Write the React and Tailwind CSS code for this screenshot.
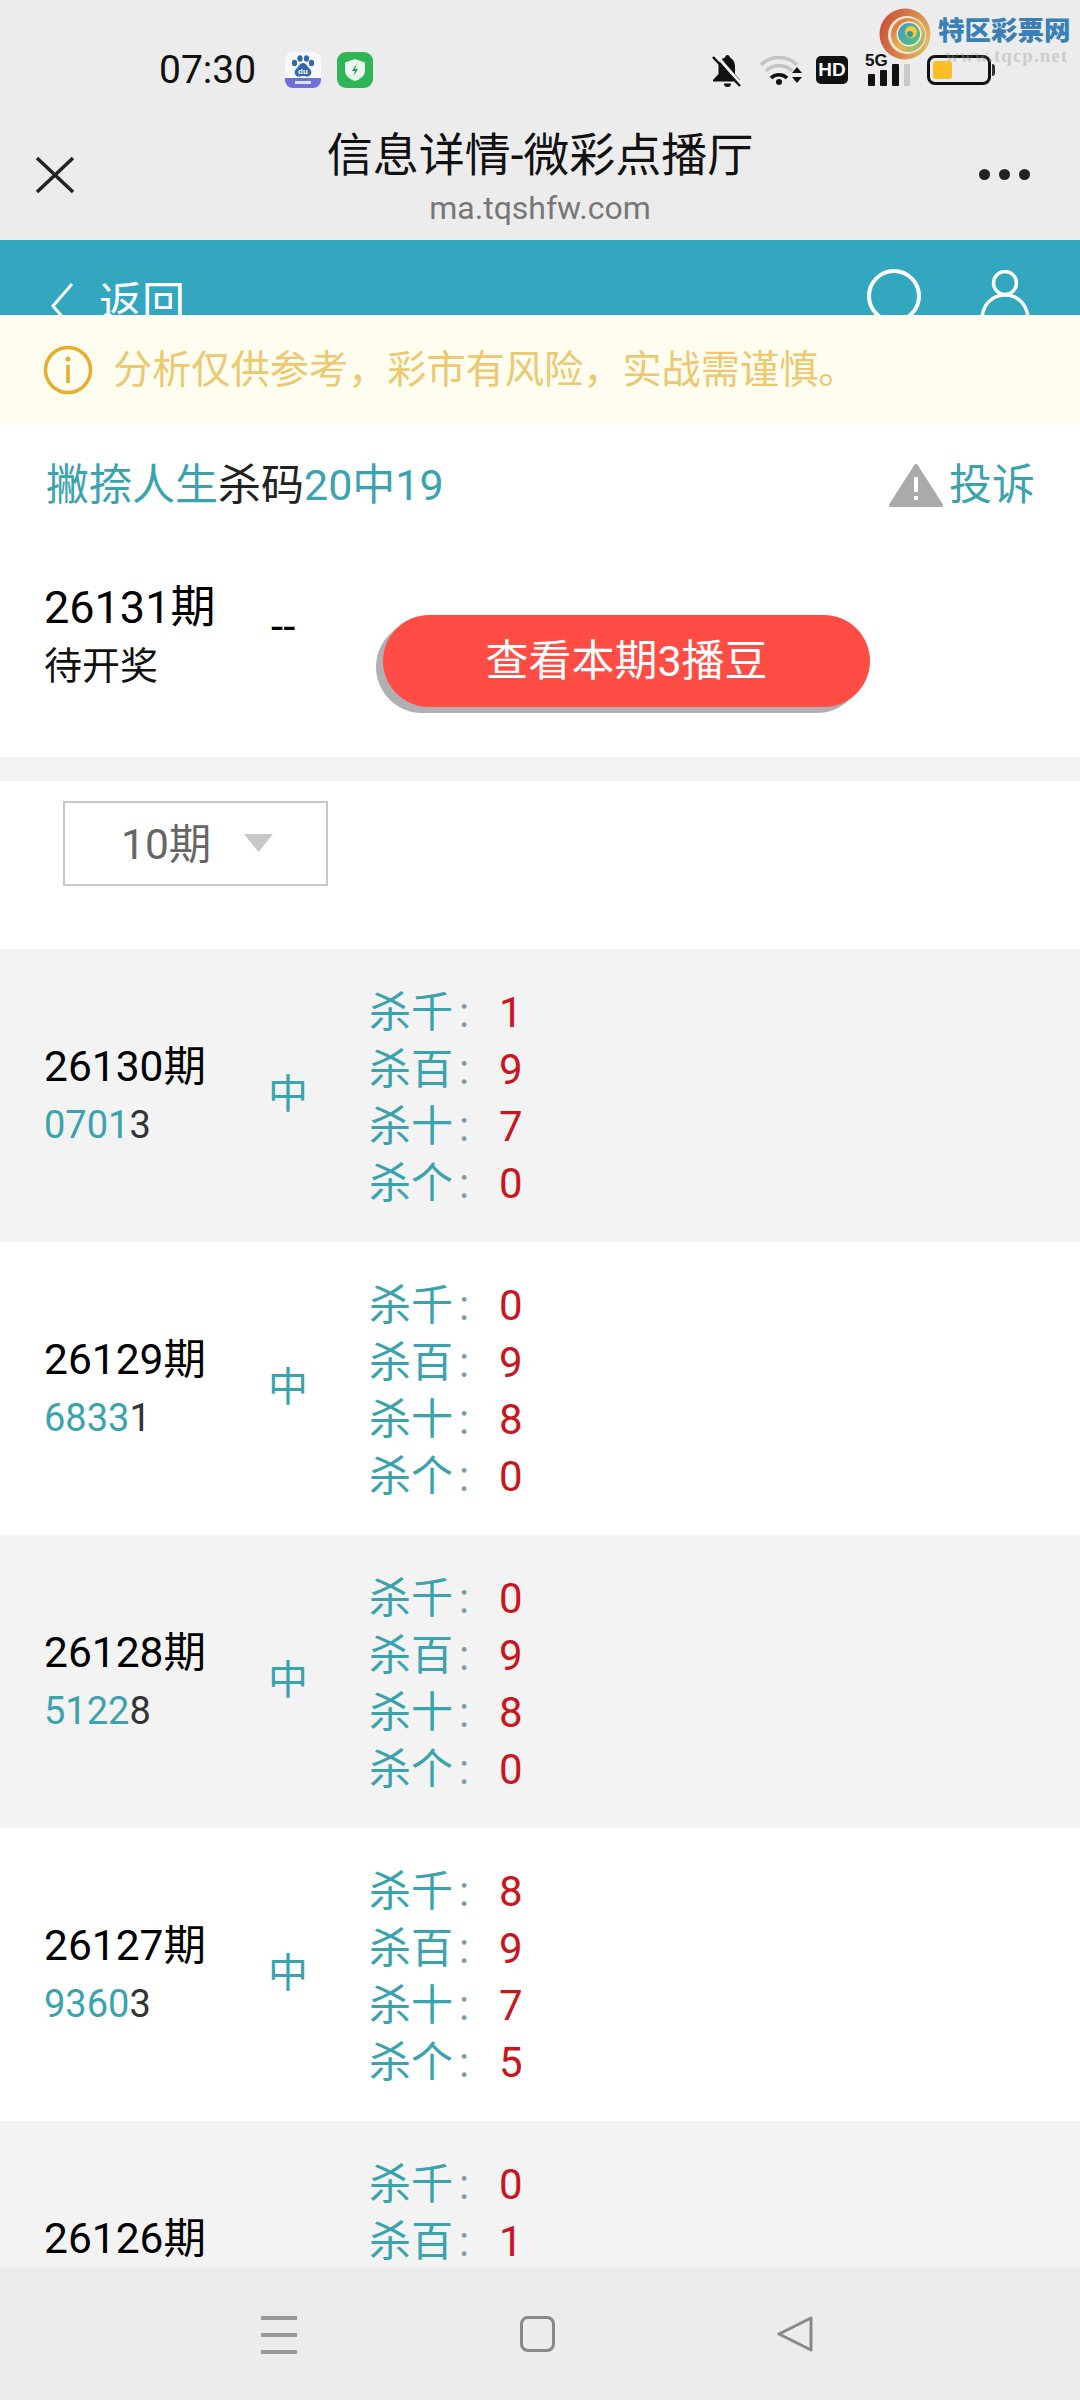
const ROWS = [
  { issue: '26130期', hit: '0701', rest: '3', kills: [['杀千', '1'], ['杀百', '9'], ['杀十', '7'], ['杀个', '0']] },
  { issue: '26129期', hit: '6833', rest: '1', kills: [['杀千', '0'], ['杀百', '9'], ['杀十', '8'], ['杀个', '0']] },
  { issue: '26128期', hit: '5122', rest: '8', kills: [['杀千', '0'], ['杀百', '9'], ['杀十', '8'], ['杀个', '0']] },
  { issue: '26127期', hit: '9360', rest: '3', kills: [['杀千', '8'], ['杀百', '9'], ['杀十', '7'], ['杀个', '5']] },
  { issue: '26126期', kills: [['杀千', '0'], ['杀百', '1']] },
]

function BaiduIcon() {
  return (
    <svg width="36" height="36" viewBox="0 0 36 36">
      <rect width="36" height="36" rx="8" fill="#f7f9fd" />
      <path d="M0 26h36v2a8 8 0 0 1-8 8H8a8 8 0 0 1-8-8z" fill="#6f6fd8" />
      <g fill="#3667a8">
        <ellipse cx="9.5" cy="11" rx="2.6" ry="3.2" />
        <ellipse cx="15" cy="6.5" rx="2.6" ry="3.2" />
        <ellipse cx="21.5" cy="6.5" rx="2.6" ry="3.2" />
        <ellipse cx="26.5" cy="11" rx="2.6" ry="3.2" />
        <path d="M18 11c-3 0-4 3-6 5-2 2-3 4-2 6 1 2 3 3 5 2.400 2-.5 4-.5 6 0 2 .6 4-.4 5-2.400 1-2 0-4-2-6-2-2-3-5-6-5z" />
      </g>
      <text x="18" y="22" textAnchor="middle" fontSize="8" fontWeight="700" fill="#fff" fontFamily="Liberation Sans">du</text>
      <rect x="10" y="29" width="16" height="3" fill="#dfe0fa" />
    </svg>
  )
}

function ShieldIcon() {
  return (
    <svg width="36" height="36" viewBox="0 0 36 36">
      <rect width="36" height="36" rx="9" fill="#2fb457" />
      <path d="M18 7l10 3.500v8c0 5-4 8.500-10 10.500-6-2-10-5.500-10-10.500v-8z" fill="#e9f8ee" />
      <path d="M19.500 12l-4.500 7h3l-1.500 5 4.500-7h-3z" fill="#2c8f4f" />
    </svg>
  )
}

function BellOff() {
  return (
    <svg width="30" height="33" viewBox="0 0 30 33">
      <path d="M15.500 1c-1.400 0-2.400 1-2.400 2.400C9 4.500 6.500 8 6.500 12v8L1 26v1.500h27V26l-5-6v-8c0-4-2.500-7.500-5.100-8.600C17.900 2 16.900 1 15.500 1z" fill="#111" />
      <path d="M12 29.500h7a3.500 3.500 0 0 1-7 0z" fill="#111" />
      <path d="M4 1l26 30" stroke="#f4f4f4" strokeWidth="3" />
      <path d="M1 3l27 29" stroke="#111" strokeWidth="2.500" />
    </svg>
  )
}

function WifiIcon() {
  return (
    <svg width="43" height="32" viewBox="0 0 43 32" fill="none">
      <path d="M1 11C10 1 28 1 37 11" stroke="#c4c4c4" strokeWidth="3.500" />
      <path d="M6 17c6-7 20-7 26 0" stroke="#c4c4c4" strokeWidth="3.500" />
      <path d="M11 24c4-4.500 12-4.500 16 0" stroke="#111" strokeWidth="3.500" />
      <circle cx="19" cy="28" r="3" fill="#111" />
      <path d="M32 19l5-6 5 6zM32 23l5 6 5-6z" fill="#111" />
    </svg>
  )
}

function SignalIcon() {
  return (
    <div className="relative w-[46px] h-[32px]">
      <span className="absolute left-0 top-[-2px] text-[17px] leading-[18px] font-bold text-[#111] font-['Liberation_Sans',sans-serif]">5G</span>
      <svg className="absolute left-0 top-0" width="46" height="32" viewBox="0 0 46 32">
        <rect x="3" y="20" width="7" height="12" rx="1" fill="#111" />
        <rect x="15" y="16" width="7" height="16" rx="1" fill="#111" />
        <rect x="27" y="10" width="7" height="22" rx="1" fill="#111" />
        <rect x="39" y="10" width="6" height="22" fill="#c9c9c9" />
      </svg>
    </div>
  )
}

function Battery() {
  return (
    <div className="flex items-center">
      <div className="w-[64px] h-[30px] rounded-[8px] border-[3px] border-[#111] p-[3px] flex">
        <div className="w-[19px] rounded-[3px] bg-[#fbbf24]" />
      </div>
      <div className="w-[3px] h-[12px] ml-[1px] bg-[#333] rounded-r-sm" />
    </div>
  )
}

function SwirlLogo() {
  return (
    <svg width="52" height="52" viewBox="0 0 52 52">
      <defs>
        <linearGradient id="swirlOuter" x1="0" y1="0.3" x2="1" y2="0.7">
          <stop offset="0" stopColor="#c9503a" />
          <stop offset="0.6" stopColor="#d98a4e" />
          <stop offset="1" stopColor="#e6bd6a" />
        </linearGradient>
        <linearGradient id="swirlMid" x1="0" y1="0" x2="1" y2="1">
          <stop offset="0" stopColor="#e0603c" />
          <stop offset="0.55" stopColor="#e8b34e" />
          <stop offset="1" stopColor="#6cc08e" />
        </linearGradient>
        <linearGradient id="swirlIn" x1="0" y1="0" x2="1" y2="1">
          <stop offset="0" stopColor="#3a9ec8" />
          <stop offset="1" stopColor="#5cc07c" />
        </linearGradient>
      </defs>
      <circle cx="26" cy="26" r="25.500" fill="url(#swirlOuter)" />
      <circle cx="28" cy="27" r="19" fill="#f5e8d4" />
      <circle cx="29" cy="27" r="17" fill="url(#swirlMid)" />
      <circle cx="30" cy="26" r="12.500" fill="#f6efe0" />
      <circle cx="30" cy="26" r="11" fill="url(#swirlIn)" />
      <circle cx="32" cy="24" r="6" fill="#f3c83a" />
      <circle cx="31" cy="26" r="3" fill="#2f9aa0" />
    </svg>
  )
}

function KillRow({ row, shaded }) {
  return (
    <div className={`h-[293px] shrink-0 flex items-start pt-[35px] pl-[44px] ${shaded ? 'bg-[#f3f3f3]' : 'bg-white'}`}>
      <div className="w-[224px] pt-[54px]">
        <div className="text-[42.500px] leading-[58px] text-black">{row.issue}</div>
        {row.hit && (
          <div className="text-[38px] leading-[58px] text-[#333]">
            <span className="text-[#3ba3ae]">{row.hit}</span>{row.rest}
          </div>
        )}
      </div>
      <div className="w-[101px] pt-[82px] text-[40px] leading-[58px] text-[#3ba3ae]">{row.hit ? '中' : ''}</div>
      <div>
        {row.kills.map(([label, value]) => (
          <div key={label} className="flex h-[57px] items-center text-[42px] leading-[57px]">
            <span className="w-[130px] text-[#3ba3ae]">{label}<span className="ml-[6px] text-[#7f9ea3]">:</span></span>
            <span className="text-[#c9151e]">{value}</span>
          </div>
        ))}
      </div>
    </div>
  )
}

export default function App() {
  return (
    <div className="relative w-[1080px] h-[2400px] flex flex-col overflow-hidden bg-white font-['Roboto','Noto_Sans_CJK_SC',sans-serif]">
      <div className="h-[240px] shrink-0 bg-[#ececec]">
        <div className="h-[100px] pt-[40px] pl-[159px] pr-[85px] flex items-center">
          <span className="text-[39px] leading-[60px] text-[#111]">07:30</span>
          <div className="ml-[29px] flex gap-[16px]">
            <BaiduIcon />
            <ShieldIcon />
          </div>
          <div className="ml-auto flex items-center">
            <BellOff />
            <div className="ml-[18px]"><WifiIcon /></div>
            <div className="ml-[13px] w-[32px] h-[28px] rounded-[5px] bg-[#111] flex items-center justify-center text-[19px] font-bold text-white font-['Liberation_Sans',sans-serif]">HD</div>
            <div className="ml-[17px]"><SignalIcon /></div>
            <div className="ml-[16px]"><Battery /></div>
          </div>
        </div>
        <div className="flex items-start pt-[25px] pl-[34px] pr-[50px]">
          <svg className="mt-[30px]" width="42" height="40" viewBox="0 0 42 40" fill="none" stroke="#222" strokeWidth="3.500">
            <path d="M3 3l36 34M39 3L3 37" />
          </svg>
          <div className="flex-1 pl-[25px] text-center">
            <div className="text-[46px] leading-[60px] text-[#111]">信息详情-微彩点播厅</div>
            <div className="mt-[3px] text-[32px] leading-[40px] text-[#777]">ma.tqshfw.com</div>
          </div>
          <div className="mt-[44px] flex gap-[9px]">
            <span className="w-[11px] h-[11px] rounded-full bg-[#222]" />
            <span className="w-[11px] h-[11px] rounded-full bg-[#222]" />
            <span className="w-[11px] h-[11px] rounded-full bg-[#222]" />
          </div>
        </div>
      </div>

      <div className="h-[75px] shrink-0 overflow-hidden bg-[#33a6c0] flex items-start pl-[50px] pr-[50px] text-white">
        <svg className="mt-[42px]" width="24" height="50" viewBox="0 0 24 50" fill="none" stroke="#fff" strokeWidth="3">
          <path d="M22 2L3 24l19 22" />
        </svg>
        <span className="ml-[25px] mt-[33px] text-[43px] leading-[60px]">返回</span>
        <svg className="ml-auto mt-[29px]" width="54" height="54" viewBox="0 0 54 54" fill="none" stroke="#fff" strokeWidth="4">
          <circle cx="27" cy="27" r="25" />
        </svg>
        <svg className="ml-[59px] mt-[30px]" width="50" height="60" viewBox="0 0 50 60" fill="none" stroke="#fff" strokeWidth="3.500">
          <circle cx="25" cy="13" r="11.500" />
          <path d="M2 50c0-15 10-25 23-25s23 10 23 25" />
        </svg>
      </div>

      <div className="h-[109px] shrink-0 bg-[#fffdf0] flex items-center pl-[43px]">
        <svg width="50" height="50" viewBox="0 0 50 50" fill="none">
          <circle cx="25" cy="25" r="22.500" stroke="#e8ad2c" strokeWidth="3.500" />
          <circle cx="25" cy="14" r="2.500" fill="#e8ad2c" />
          <rect x="23.200" y="20" width="3.600" height="18" fill="#e8ad2c" />
        </svg>
        <span className="ml-[20px] text-[39.200px] leading-[50px] text-[#ecc870]">分析仅供参考，彩市有风险，实战需谨慎。</span>
      </div>

      <div className="flex-1 min-h-0 overflow-hidden">
        <div className="h-[333px] pt-[33px] relative">
          <div className="pl-[46px] pr-[45px] flex items-center h-[56px] text-[43px] leading-[56px] text-[#3ba3ae]">
            <span>撇捺人生<span className="text-[#222]">杀码</span>20中19</span>
            <svg className="ml-auto" width="54" height="46" viewBox="0 0 54 46">
              <path d="M27 4L52 43H2z" fill="#aaa" stroke="#aaa" strokeWidth="4" strokeLinejoin="round" />
              <rect x="25" y="15" width="4" height="15" fill="#fff" />
              <rect x="25" y="34" width="4" height="4" fill="#fff" />
            </svg>
            <span className="ml-[6px]">投诉</span>
          </div>
          <div className="mt-[65px] pl-[44px] flex items-start">
            <div className="w-[227px]">
              <div className="text-[45px] leading-[60px] text-black">26131期</div>
              <div className="text-[38px] leading-[56px] text-[#111]">待开奖</div>
            </div>
            <span className="w-[112px] mt-[24px] text-[44px] leading-[50px] text-black">--</span>
            <button className="mt-[37px] w-[487px] h-[92px] rounded-full bg-[#ff4d45] text-white text-[43px] shadow-[-7px_6px_0_#b0b0b4]">
              查看本期3播豆
            </button>
          </div>
        </div>
        <div className="h-[24px] bg-[#f3f3f3]" />
        <div className="h-[168px] pt-[20px] pl-[63px] bg-white">
          <div className="w-[265px] h-[85px] border-2 border-[#c8c8c8] flex items-center pl-[56px]">
            <span className="mt-[3px] text-[42.500px] text-[#666]">10期</span>
            <svg className="ml-[33px] mt-[-2px]" width="29" height="18" viewBox="0 0 29 18">
              <path d="M0 0h29L14.500 18z" fill="#c8c8c8" />
            </svg>
          </div>
        </div>
        {ROWS.map((row, i) => (
          <KillRow key={row.issue} row={row} shaded={i % 2 === 0} />
        ))}
      </div>

      <div className="h-[132px] shrink-0 bg-[#ececec] flex items-start pt-[48px]">
        <div className="ml-[261px] w-[36px] flex flex-col gap-[13px]">
          <span className="h-[4px] bg-[#999]" />
          <span className="h-[4px] bg-[#999]" />
          <span className="h-[4px] bg-[#999]" />
        </div>
        <div className="ml-[223px] w-[35px] h-[36px] rounded-[8px] border-[3px] border-[#888]" />
        <svg className="ml-[222px]" width="36" height="36" viewBox="0 0 36 36" fill="none" stroke="#888" strokeWidth="3" strokeLinejoin="round">
          <path d="M34 2v32L2 18z" />
        </svg>
      </div>

      {/* site watermark pasted over the status bar */}
      <div className="absolute left-[879px] top-[8px]"><SwirlLogo /></div>
      <div className="absolute left-[938px] top-[14px] text-[26.500px] leading-[34px] font-black text-[#3a7fb5] whitespace-nowrap">特区彩票网</div>
      <div className="absolute right-[12px] top-[44px] text-[19px] leading-[24px] font-bold tracking-[1px] text-[#999]/40 font-['Liberation_Serif',serif]">www.tqcp.net</div>
    </div>
  )
}
